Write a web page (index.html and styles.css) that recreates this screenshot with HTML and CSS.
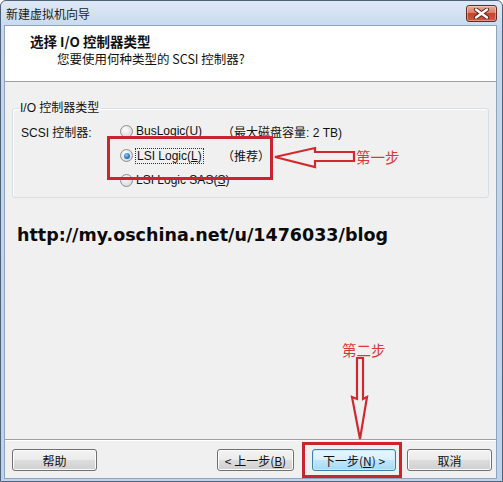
FILE: index.html
```html
<!doctype html>
<html><head>
<meta charset="utf-8">
<title>新建虚拟机向导</title>
<link rel="stylesheet" href="styles.css">
</head>
<body>
<div class="window">
	<div class="titlebar">
		<span class="caption">新建虚拟机向导</span>
		<span class="close"><svg width="17" height="11" viewBox="0 0 17 11">
			<path d="M3 1.5 L14 9.5 M14 1.5 L3 9.5" stroke="#5b1d16" stroke-width="4.2" stroke-linecap="round"/>
			<path d="M3 1.5 L14 9.5 M14 1.5 L3 9.5" stroke="#fff" stroke-width="2.4" stroke-linecap="round"/>
		</svg></span>
	</div>
	<div class="client">
		<div class="header">
			<div class="head-title">选择 I/O 控制器类型</div>
			<div class="head-sub">您要使用何种类型的 SCSI 控制器?</div>
		</div>
		<div class="main">
			<fieldset class="group">
				<legend>I/O 控制器类型</legend>
				<div class="choices">
					<span>SCSI 控制器:</span>
					<span class="opt"><i class="radio"></i><span>BusLogic(<u>U</u>)</span></span>
					<span>（最大磁盘容量: 2 TB)</span>

					<span></span>
					<span class="opt"><i class="radio on"></i><span class="focus">LSI Logic(<u>L</u>)</span></span>
					<span>（推荐）</span>

					<span></span>
					<span class="opt"><i class="radio"></i><span>LSI Logic SAS(<u>S</u>)</span></span>
					<span></span>
				</div>
			</fieldset>
			<div class="url">http://my.oschina.net/u/1476033/blog</div>
		</div>
		<div class="footer">
			<span class="btn help">帮助</span>
			<span class="btn back">&lt; 上一步(<u>B</u>)</span>
			<span class="btn next">下一步(<u>N</u>) &gt;</span>
			<span class="btn cancel">取消</span>
		</div>
	</div>

	<!-- red annotations drawn over the dialog -->
	<div class="mark box-one"></div>
	<svg class="mark arrow-left" width="84" height="24" viewBox="0 0 84 24">
		<path d="M2 11 L42 2 L42 6 L81 6 L81 15 L42 15 L42 21 Z" fill="none" stroke="#cf2a30" stroke-width="2.2"/>
	</svg>
	<div class="mark note note-one">第一步</div>
	<div class="mark note note-two">第二步</div>
	<svg class="mark arrow-down" width="22" height="86" viewBox="0 0 22 86">
		<path d="M8 3 L14 3 L14 44 L18 42 L11 84 L3 42 L8 44 Z" fill="none" stroke="#cf2a30" stroke-width="2.2"/>
	</svg>
	<div class="mark box-two"></div>
</div>
</body></html>
```

FILE: styles.css
```css
body {
	margin: 0;
	font-family: "Liberation Sans", "Noto Sans CJK SC", sans-serif;
	font-size: 12px;
	color: #111;
}
.window {
	position: relative;
	width: 503px;
	height: 482px;
	box-sizing: border-box;
	border: 1px solid #4f6179;
	border-radius: 6px 6px 0 0;
	padding: 0 5px 2px 3px;
	background: linear-gradient(#dfe9f5, #c4d7ee 30px, #bdd2ec);
	display: flex;
	flex-direction: column;
}
.titlebar {
	height: 24px;
	display: flex;
	align-items: center;
	justify-content: space-between;
	padding-left: 2px;
}
.caption {
	font-family: "Noto Sans CJK SC", sans-serif;
	font-size: 12px;
	color: #1c1c1c;
}
.close {
	width: 31px;
	height: 17px;
	box-sizing: border-box;
	border: 1px solid #6a2a22;
	border-radius: 3px;
	background: linear-gradient(#eaa99a, #d8806a 45%, #c2452c 50%, #d25a3e);
	display: flex;
	align-items: center;
	justify-content: center;
	box-shadow: inset 0 0 0 1px rgba(255,255,255,0.35);
}
.client {
	flex: 1;
	display: flex;
	flex-direction: column;
	border: 1px solid #8ea3bd;
	background: #f0f0f0;
}
.header {
	height: 56px;
	box-sizing: border-box;
	background: #fff;
	border-bottom: 1px solid #a0a0a0;
	padding: 6px 0 0 25px;
	font-family: "Noto Sans CJK SC", sans-serif;
}
.head-title {
	font-weight: bold;
	font-size: 13.5px;
	line-height: 18px;
}
.head-sub {
	margin-left: 27px;
	font-size: 12.5px;
	line-height: 18px;
}
.main {
	flex: 1;
	padding: 0 7px 0 7px;
}
.group {
	margin: 18px 0 0 0;
	padding: 0 6px 4px 6px;
	border: 1px solid #d5dfe5;
	border-radius: 3px;
	box-shadow: inset 1px 1px 0 #fff;
}
.group legend {
	padding: 0 1px;
	line-height: 16px;
}
.choices {
	display: grid;
	grid-template-columns: 99px 102px auto;
	grid-auto-rows: 24.5px;
	align-items: center;
	padding: 3px 0 0 2px;
}
.opt {
	display: flex;
	align-items: center;
	gap: 3px;
	white-space: nowrap;
}
.radio {
	flex: none;
	width: 13px;
	height: 13px;
	box-sizing: border-box;
	border-radius: 50%;
	border: 1px solid #8f8f8f;
	background: radial-gradient(circle at 40% 35%, #fdfdfd, #dcdcdc 70%, #cfcfcf);
	display: flex;
	align-items: center;
	justify-content: center;
}
.radio.on::after {
	content: "";
	width: 6px;
	height: 6px;
	border-radius: 50%;
	background: radial-gradient(circle at 40% 35%, #8ccbf4, #2a7bc2 55%, #0f4d8a);
}
.focus {
	outline: 1px dotted #333;
	outline-offset: 0;
	padding: 0 1px;
}
.url {
	margin: 25px 0 0 5px;
	font-family: "DejaVu Sans", sans-serif;
	font-weight: bold;
	font-size: 17.5px;
	line-height: 24px;
	color: #0a0a0a;
}
.footer {
	height: 39px;
	box-sizing: border-box;
	border-top: 1px solid #a0a0a0;
	box-shadow: inset 0 1px 0 #fff;
	padding: 9px 0 0 7px;
	display: flex;
	align-items: flex-start;
	font-family: "Noto Sans CJK SC", sans-serif;
}
.btn {
	height: 22px;
	box-sizing: border-box;
	border: 1px solid #707070;
	border-radius: 3px;
	background: linear-gradient(#f3f3f3, #ebebeb 48%, #dddddd 52%, #cfcfcf);
	box-shadow: inset 0 0 0 1px #fcfcfc;
	display: flex;
	align-items: center;
	justify-content: center;
	font-size: 12px;
	color: #111;
}
.help { width: 85px; }
.back { width: 77px; margin-left: 120px; }
.next {
	width: 84px;
	margin-left: 18px;
	border-color: #3c7fb1;
	background: linear-gradient(#eaf6fd, #d9f0fc 48%, #bee6fd 52%, #a7d9f5);
	box-shadow: inset 0 0 0 1px #c5ecfc;
}
.cancel { width: 85px; margin-left: 11px; }

.mark {
	position: absolute;
}
.box-one, .box-two {
	box-sizing: border-box;
	border: 3px solid #c9252f;
}
.box-one {
	left: 106px;
	top: 135px;
	width: 166px;
	height: 44px;
}
.box-two {
	left: 301px;
	top: 441px;
	width: 100px;
	height: 36px;
}
.arrow-left {
	left: 272px;
	top: 145px;
}
.arrow-down {
	left: 348px;
	top: 354px;
}
.note {
	font-family: "Noto Sans CJK SC", sans-serif;
	font-size: 14.5px;
	line-height: 18px;
	color: #d63a3a;
}
.note-one {
	left: 355px;
	top: 147px;
}
.note-two {
	left: 341px;
	top: 340px;
}
```
